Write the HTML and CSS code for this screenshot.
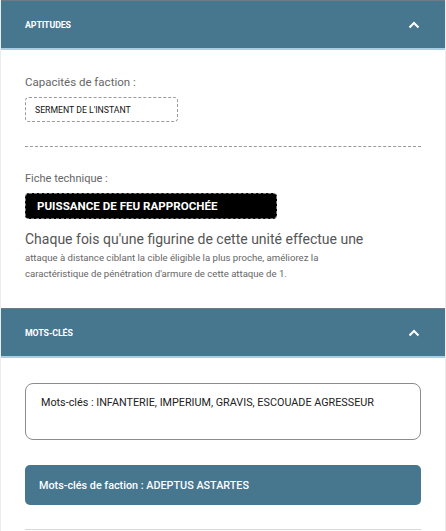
FILE: index.html
```
<!DOCTYPE html>
<html lang="fr">
<head>
<meta charset="utf-8">
<link rel="stylesheet" href="styles.css">
</head>
<body>
<div class="page">
  <div class="section-head">
    <span class="section-title">APTITUDES</span>
    <svg class="chev" width="12" height="8" viewBox="0 0 12 8"><path d="M1.5 6.5 L6 2 L10.5 6.5" fill="none" stroke="#fff" stroke-width="2"/></svg>
  </div>
  <div class="section-body aptitudes">
    <div class="label label-lg">Capacités de faction :</div>
    <div class="tag-dashed">SERMENT DE L'INSTANT</div>
    <div class="sep"></div>
    <div class="label label-sm">Fiche technique :</div>
    <div class="tag-black">PUISSANCE DE FEU RAPPROCHÉE</div>
    <div class="desc-lead">Chaque fois qu'une figurine de cette unité effectue une</div>
    <p class="desc">attaque à distance ciblant la cible éligible la plus proche, améliorez la<br>caractéristique de pénétration d'armure de cette attaque de 1.</p>
  </div>
  <div class="section-head">
    <span class="section-title">MOTS-CLÉS</span>
    <svg class="chev" width="12" height="8" viewBox="0 0 12 8"><path d="M1.5 6.5 L6 2 L10.5 6.5" fill="none" stroke="#fff" stroke-width="2"/></svg>
  </div>
  <div class="section-body keywords">
    <div class="kw-box">Mots-clés : INFANTERIE, IMPERIUM, GRAVIS, ESCOUADE AGRESSEUR</div>
    <div class="kw-faction">Mots-clés de faction : ADEPTUS ASTARTES</div>
    <div class="bottom-line"></div>
  </div>
</div>
</body>
</html>
```
FILE: styles.css
```
html, body {
  margin: 0;
  padding: 0;
  background: #ffffff;
}
body {
  font-family: Roboto, "Liberation Sans", Arial, sans-serif;
}
.page {
  width: 446px;
  height: 531px;
  overflow: hidden;
  border-left: 1px solid #ececec;
  border-right: 1px solid #ececec;
  box-sizing: border-box;
}
.section-head {
  height: 50px;
  box-sizing: border-box;
  background: #47768f;
  border-top: 1px solid #6d7c83;
  border-bottom: 2px solid #a9cfe3;
  display: flex;
  align-items: center;
  justify-content: space-between;
  padding: 0 25px 0 24px;
}
.section-title {
  color: #ffffff;
  font-size: 8.8px;
  font-weight: 700;
  letter-spacing: -0.1px;
}
.chev {
  display: block;
}
.section-body {
  padding: 0 24px;
}
.aptitudes {
  padding-top: 25px;
  padding-bottom: 26px;
}
.label {
  color: #666666;
}
.label-lg {
  font-size: 11.5px;
  line-height: 14px;
}
.label-sm {
  font-size: 11px;
  line-height: 12px;
  margin-top: 26px;
}
.tag-dashed {
  margin-top: 8px;
  width: 153px;
  height: 25px;
  box-sizing: border-box;
  border: 1px dashed #9a9a9a;
  border-radius: 4px;
  font-size: 8.7px;
  color: #111;
  display: flex;
  align-items: center;
  padding-left: 9px;
}
.sep {
  margin-top: 24px;
  border-top: 1px dashed #9a9a9a;
}
.tag-black {
  margin-top: 8px;
  width: 252px;
  height: 26px;
  box-sizing: border-box;
  background: #000;
  border: 1px dashed #777;
  border-radius: 4px;
  color: #fff;
  font-size: 11.6px;
  font-weight: 700;
  display: flex;
  align-items: center;
  padding-left: 11px;
}
.desc-lead {
  margin-top: 10px;
  font-size: 14px;
  line-height: 20px;
  color: #555555;
}
.desc {
  margin: 1px 0 0;
  color: #666666;
  font-size: 9.6px;
  line-height: 16px;
}
.keywords {
  padding-top: 25px;
}
.kw-box {
  height: 57px;
  box-sizing: border-box;
  border: 1px solid #8c8c8c;
  border-radius: 8px;
  padding: 12px 0 0 15px;
  font-size: 10.8px;
  color: #222;
}
.kw-faction {
  margin-top: 25px;
  height: 40px;
  box-sizing: border-box;
  background: #47768f;
  border-radius: 5px;
  color: #fff;
  font-size: 10.8px;
  font-weight: 500;
  display: flex;
  align-items: center;
  padding-left: 14px;
}
.bottom-line {
  margin-top: 24px;
  border-top: 1px solid #d8d8d8;
}
```
